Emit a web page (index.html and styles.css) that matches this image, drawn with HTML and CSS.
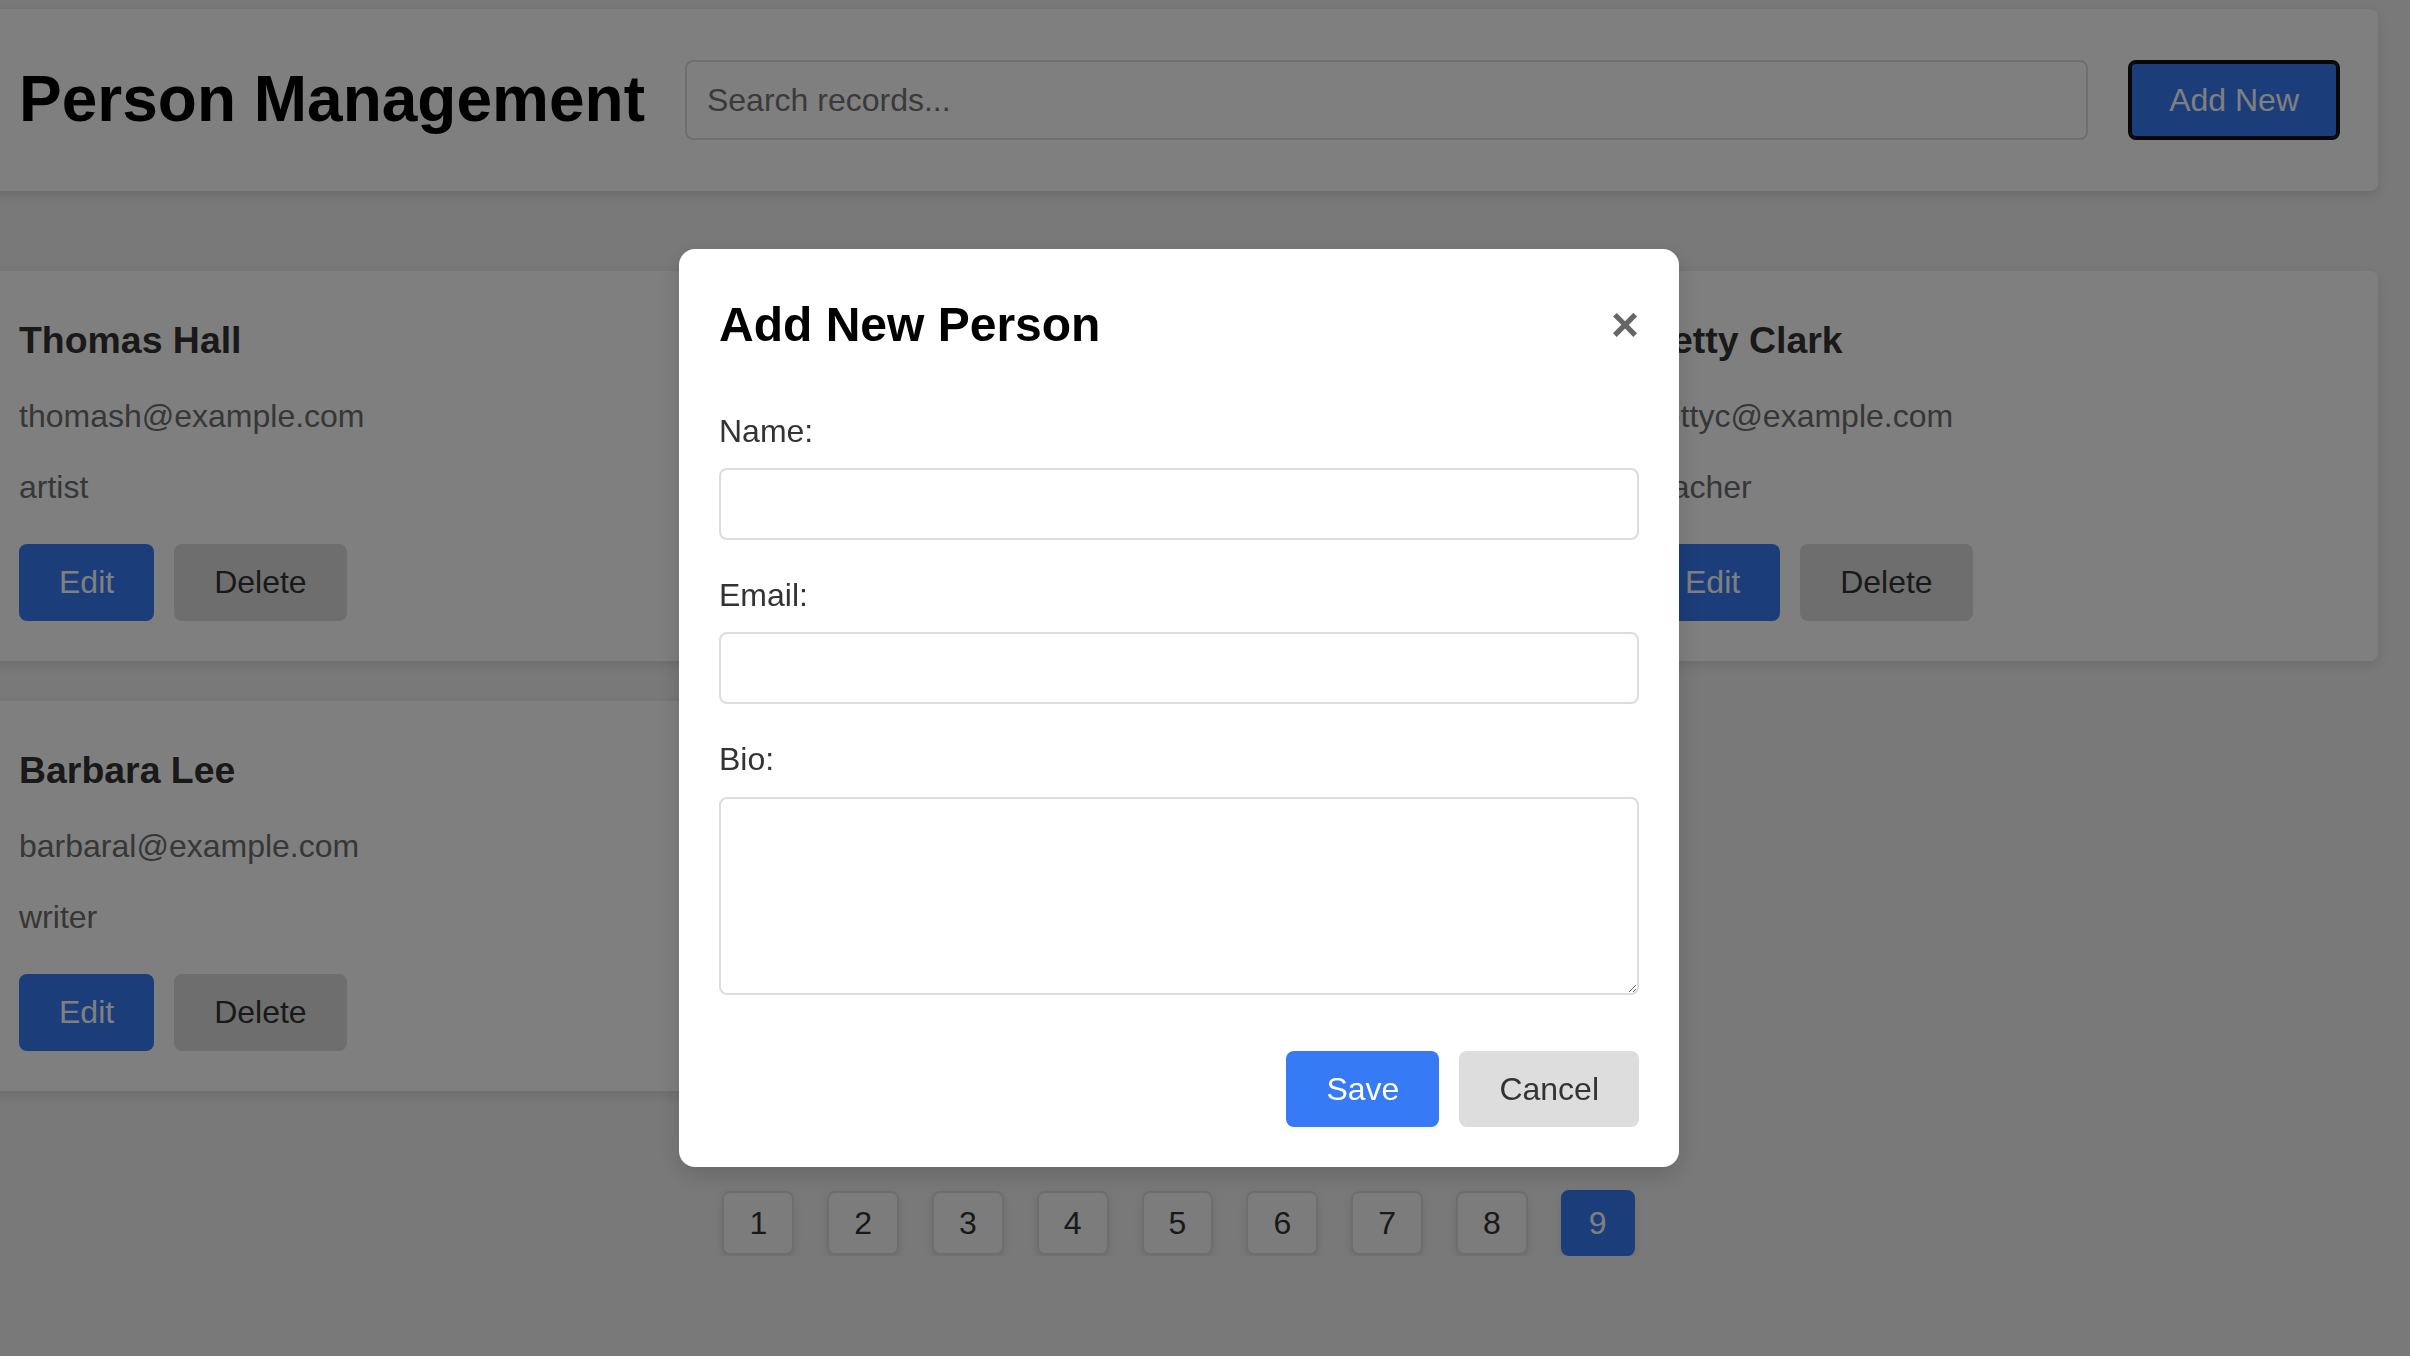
FILE: index.html
```html
<!DOCTYPE html>
<html lang="en">
<head>
<meta charset="utf-8">
<title>Person Management</title>
<link rel="stylesheet" href="styles.css">
</head>
<body>
<div class="page">
  <header class="topbar">
    <h1>Person Management</h1>
    <input class="search" type="text" placeholder="Search records...">
    <button class="btn btn-primary add-btn">Add New</button>
  </header>

  <main class="grid">
    <article class="card">
      <h3>Thomas Hall</h3>
      <p>thomash@example.com</p>
      <p>artist</p>
      <div class="card-actions">
        <button class="btn btn-primary">Edit</button>
        <button class="btn btn-secondary">Delete</button>
      </div>
    </article>
    <article class="card">
      <h3>Nancy Allen</h3>
      <p>nancya@example.com</p>
      <p>designer</p>
      <div class="card-actions">
        <button class="btn btn-primary">Edit</button>
        <button class="btn btn-secondary">Delete</button>
      </div>
    </article>
    <article class="card">
      <h3>Betty Clark</h3>
      <p>bettyc@example.com</p>
      <p>teacher</p>
      <div class="card-actions">
        <button class="btn btn-primary">Edit</button>
        <button class="btn btn-secondary">Delete</button>
      </div>
    </article>
    <article class="card">
      <h3>Barbara Lee</h3>
      <p>barbaral@example.com</p>
      <p>writer</p>
      <div class="card-actions">
        <button class="btn btn-primary">Edit</button>
        <button class="btn btn-secondary">Delete</button>
      </div>
    </article>
  </main>

  <nav class="pagination">
    <button class="page-btn">1</button>
    <button class="page-btn">2</button>
    <button class="page-btn">3</button>
    <button class="page-btn">4</button>
    <button class="page-btn">5</button>
    <button class="page-btn">6</button>
    <button class="page-btn">7</button>
    <button class="page-btn">8</button>
    <button class="page-btn active">9</button>
  </nav>
</div>

<div class="overlay">
  <div class="modal">
    <div class="modal-header">
      <h2>Add New Person</h2>
      <button class="close">&times;</button>
    </div>
    <form class="modal-form">
      <div class="form-group">
        <label for="name">Name:</label>
        <input id="name" type="text">
      </div>
      <div class="form-group">
        <label for="email">Email:</label>
        <input id="email" type="email">
      </div>
      <div class="form-group">
        <label for="bio">Bio:</label>
        <textarea id="bio"></textarea>
      </div>
      <div class="modal-actions">
        <button type="button" class="btn btn-primary">Save</button>
        <button type="button" class="btn btn-secondary">Cancel</button>
      </div>
    </form>
  </div>
</div>
</body>
</html>
```

FILE: styles.css
```css
* {
  box-sizing: border-box;
}

html,
body {
  margin: 0;
  padding: 0;
}

body {
  font-family: "Liberation Sans", Arial, sans-serif;
  font-size: 32px;
  line-height: 1.6;
  background: #f2f2f2;
  color: #000;
  overflow: hidden;
}

.page {
  width: 2399px;
  margin-left: -21px;
  padding-top: 9px;
}

/* Header */
.topbar {
  display: flex;
  align-items: center;
  gap: 40px;
  height: 182px;
  padding: 0 38px 0 40px;
  background: #fff;
  border-radius: 8px;
  box-shadow: 0 4px 12px rgba(0, 0, 0, 0.1);
}

.topbar h1 {
  margin: 0;
  font-size: 64px;
  line-height: 73.6px;
  white-space: nowrap;
}

.search {
  flex: 1;
  height: 80px;
  padding: 0 20px;
  font-family: inherit;
  font-size: 32px;
  line-height: normal;
  border: 2px solid #ddd;
  border-radius: 8px;
  background: #fff;
  color: #333;
}

.search::placeholder {
  color: #757575;
}

/* Buttons */
.btn {
  font-family: inherit;
  font-size: 32px;
  line-height: 36.8px;
  padding: 20px 40px;
  border: none;
  border-radius: 8px;
  cursor: pointer;
}

.btn-primary {
  background: #377af5;
  color: #fff;
}

.btn-secondary {
  background: #ddd;
  color: #333;
}

.add-btn {
  height: 80px;
  padding: 0 39px;
  border: 2px solid #101010;
  box-shadow: inset 0 0 0 2px #101010;
  white-space: nowrap;
}

/* Cards */
.grid {
  display: grid;
  grid-template-columns: repeat(3, 1fr);
  gap: 40px;
  margin-top: 80px;
}

.card {
  background: #fff;
  border-radius: 8px;
  padding: 40px;
  box-shadow: 0 4px 12px rgba(0, 0, 0, 0.1);
}

.card h3 {
  margin: 0 0 20px;
  font-size: 37.44px;
  line-height: 1.6;
  color: #333;
}

.card p {
  margin: 0 0 20px;
  color: #6e6e6e;
}

.card-actions {
  display: flex;
  gap: 20px;
  margin-top: 31px;
}

/* Pagination */
.pagination {
  display: flex;
  justify-content: center;
  align-items: center;
  gap: 33px;
  margin-top: 99px;
}

.page-btn {
  font-family: inherit;
  font-size: 32px;
  line-height: 36px;
  padding: 12px 25px;
  border: 2px solid #ddd;
  border-radius: 8px;
  background: #f8f8f8;
  color: #333;
  box-shadow: 0 4px 8px rgba(0, 0, 0, 0.1);
  cursor: pointer;
}

.page-btn.active {
  padding: 13px 26px;
  background: #377af5;
  border-color: #377af5;
  color: #fff;
}

/* Modal */
.overlay {
  position: fixed;
  inset: 0;
  background: rgba(0, 0, 0, 0.5);
}

.modal {
  position: absolute;
  left: 679px;
  top: 249px;
  width: 1000px;
  padding: 40px;
  background: #fff;
  border-radius: 16px;
  box-shadow: 0 8px 24px rgba(0, 0, 0, 0.15);
}

.modal-header {
  display: flex;
  justify-content: space-between;
  align-items: center;
  margin-bottom: 45px;
}

.modal-header h2 {
  margin: 0;
  font-size: 48px;
  line-height: 72px;
}

.close {
  padding: 0;
  border: none;
  background: none;
  font-family: inherit;
  font-size: 48px;
  font-weight: bold;
  line-height: 48px;
  color: #666;
  cursor: pointer;
}

.form-group {
  margin-bottom: 30px;
}

.form-group label {
  display: block;
  line-height: 51.2px;
  margin-bottom: 11px;
  color: #333;
}

.form-group input,
.form-group textarea {
  display: block;
  width: 100%;
  padding: 16px;
  font-family: inherit;
  font-size: 32px;
  line-height: normal;
  border: 2px solid #ddd;
  border-radius: 8px;
  background: #fff;
  color: #333;
}

.form-group input {
  height: 72px;
}

.form-group textarea {
  height: 198px;
}

.modal-actions {
  display: flex;
  justify-content: flex-end;
  gap: 20px;
  padding-top: 26px;
}
```
